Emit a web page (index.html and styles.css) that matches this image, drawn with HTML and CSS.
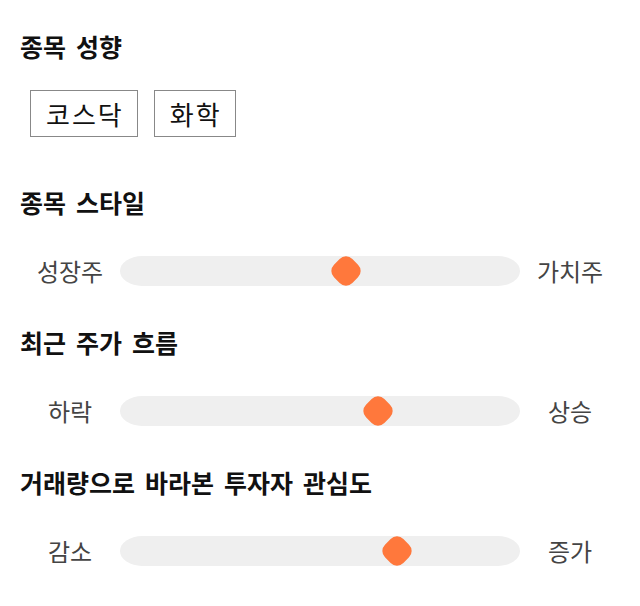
FILE: index.html
```html
<!DOCTYPE html>
<html lang="ko">
<head>
<meta charset="utf-8">
<link rel="stylesheet" href="styles.css">
</head>
<body>
<main class="page">
  <section class="group group-tags">
    <h2 class="title">종목 성향</h2>
    <div class="tags">
      <span class="tag">코스닥</span>
      <span class="tag">화학</span>
    </div>
  </section>
  <section class="group">
    <h2 class="title">종목 스타일</h2>
    <div class="scale">
      <span class="label">성장주</span>
      <div class="track"><span class="thumb" style="left: 225.5px"></span></div>
      <span class="label">가치주</span>
    </div>
  </section>
  <section class="group">
    <h2 class="title">최근 주가 흐름</h2>
    <div class="scale">
      <span class="label">하락</span>
      <div class="track"><span class="thumb" style="left: 258px"></span></div>
      <span class="label">상승</span>
    </div>
  </section>
  <section class="group">
    <h2 class="title">거래량으로 바라본 투자자 관심도</h2>
    <div class="scale">
      <span class="label">감소</span>
      <div class="track"><span class="thumb" style="left: 277px"></span></div>
      <span class="label">증가</span>
    </div>
  </section>
</main>
</body>
</html>
```

FILE: styles.css
```css
html, body {
  margin: 0;
  padding: 0;
  background: #ffffff;
}

.page {
  padding: 30px 20px 0;
  font-family: "Noto Sans CJK KR", "Noto Sans", sans-serif;
  display: flex;
  flex-direction: column;
  gap: 30px;
}

.group-tags {
  margin-bottom: 19px;
}

.title {
  margin: 0 0 28px;
  font-size: 25px;
  line-height: 32px;
  font-weight: 700;
  word-spacing: 3px;
  color: #111111;
}

.tags {
  display: flex;
  gap: 16px;
  padding-left: 10px;
}

.tag {
  display: inline-block;
  border: 1px solid #888888;
  padding: 7px 13px 7px 15px;
  font-size: 26px;
  line-height: 31px;
  letter-spacing: 2px;
  color: #111111;
}

.scale {
  display: grid;
  grid-template-columns: 100px 400px 100px;
  align-items: center;
  padding: 10px 0;
}

.label {
  text-align: center;
  font-size: 24px;
  line-height: 30px;
  color: #444444;
}

.track {
  position: relative;
  height: 30px;
  background: #efefef;
  border-radius: 22px / 15px;
}

.thumb {
  position: absolute;
  top: 2px;
  width: 26px;
  height: 26px;
  margin-left: -13px;
  background: #ff783c;
  border-radius: 9px;
  transform: rotate(45deg);
}
```
